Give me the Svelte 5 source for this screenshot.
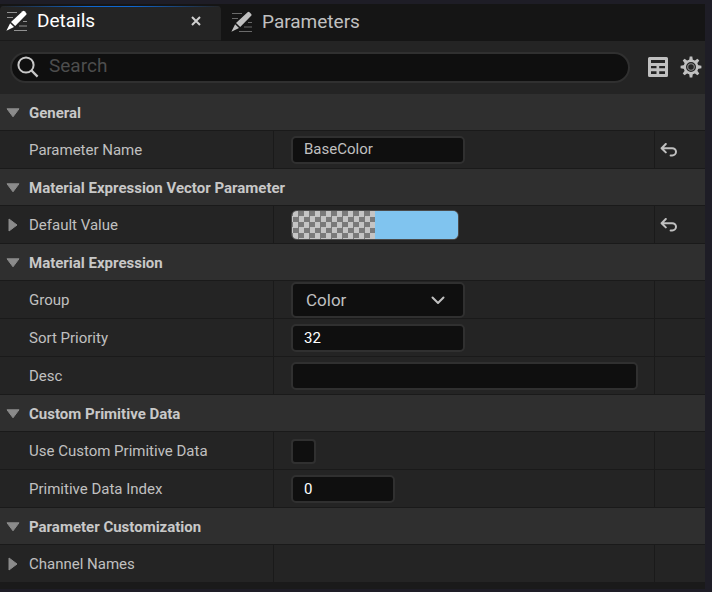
<script>
  let search = $state('');
  let open = $state({ general: true, vector: true, expression: true, primitive: true, custom: true });
  let name = $state('BaseColor');
  let group = $state('Color');
  let priority = $state('32');
  let desc = $state('');
  let usePrimitive = $state(false);
  let primitiveIndex = $state('0');
</script>

{#snippet pencil()}
  <svg class="pencil" viewBox="0 0 22 22" width="22" height="22" aria-hidden="true">
    <path d="M1 2.5h10M1 7.5h6M17 11.5h4M13 16h8M8 20.5h13" stroke="currentColor" stroke-width="1.2" opacity=".5" fill="none" />
    <path d="M16.6 1.2q1-.8 1.9 0l1.7 1.7q.9.9 0 1.9L9.2 16 5 11.9z" fill="currentColor" />
    <path d="M4.1 13.2 8 17 .4 20.8z" fill="currentColor" />
  </svg>
{/snippet}

{#snippet header(key, title)}
  <h2>
    <button class="head" aria-expanded={open[key]} onclick={() => (open[key] = !open[key])}>
      <svg class="arrow" class:shut={!open[key]} viewBox="0 0 14 10" width="14" height="10" aria-hidden="true">
        <path d="M1 .8h12L7 8.8z" fill="#8b8b8b" stroke="#8b8b8b" stroke-linejoin="round" />
      </svg>
      <span>{title}</span>
    </button>
  </h2>
{/snippet}

{#snippet expander(label)}
  <button class="expander" aria-label={label}>
    <svg viewBox="0 0 10 14" width="10" height="14" aria-hidden="true">
      <path d="M1 1v12l8-6z" fill="#8b8b8b" stroke="#8b8b8b" stroke-linejoin="round" />
    </svg>
  </button>
{/snippet}

{#snippet reset(label)}
  <button class="reset" aria-label={label}>
    <svg viewBox="0 0 18 14" width="18" height="14" aria-hidden="true">
      <path d="M5.8 1 1.6 5.2l4.2 4.2M1.8 5.2h10.400a3.800 3.600 0 0 1 0 7.200H10.600" fill="none" stroke="#c0c0c0" stroke-width="2" stroke-linecap="round" stroke-linejoin="round" />
    </svg>
  </button>
{/snippet}

<main>
  <nav>
    <div class="tab active">
      <button class="title">{@render pencil()}Details</button>
      <button class="close" aria-label="Close Details">
        <svg viewBox="0 0 10 10" width="10" height="10"><path d="M1 1l8 8M9 1 1 9" stroke="#d0d0d0" stroke-width="2" /></svg>
      </button>
    </div>
    <div class="tab">
      <button class="title">{@render pencil()}Parameters</button>
    </div>
  </nav>

  <div class="tools">
    <label class="search">
      <svg viewBox="0 0 22 22" width="22" height="22" aria-hidden="true">
        <circle cx="9" cy="9" r="7.6" fill="none" stroke="#c8c8c8" stroke-width="2" />
        <path d="M14.4 14.4 20.6 20.6" stroke="#c8c8c8" stroke-width="2.2" />
      </svg>
      <input type="text" placeholder="Search" aria-label="Search" bind:value={search} />
    </label>
    <button class="tool" aria-label="Property matrix">
      <svg viewBox="0 0 20 20" width="20" height="20">
        <path fill="#c0c0c0" fill-rule="evenodd" d="M1.5 0h17Q20 0 20 1.5v17q0 1.5-1.5 1.5h-17Q0 20 0 18.500v-17Q0 0 1.500 0zM3 3v3h14V3zM3 9v2.200h5.500V9zM11.200 9v2.200H17V9zM3 14.300V17h5.500v-2.700zM11.200 14.300V17H17v-2.700z" />
      </svg>
    </button>
    <button class="tool" aria-label="Settings">
      <svg viewBox="-11 -11 22 22" width="22" height="22">
        {#each [0, 45, 90, 135, 180, 225, 270, 315] as angle}
          <path d="M-1.900-6.500-1.300-10.400h2.600L1.900-6.500z" fill="#c0c0c0" transform="rotate({angle})" />
        {/each}
        <circle r="6.200" fill="none" stroke="#c0c0c0" stroke-width="2.400" />
        <circle r="3.300" fill="none" stroke="#8c8c8c" stroke-width="1.100" />
      </svg>
    </button>
  </div>

  <section>
    {@render header('general', 'General')}
    {#if open.general}
      <div class="row">
        <label class="name" for="pname">Parameter Name</label>
        <div class="value"><input id="pname" class="field mid raised" type="text" bind:value={name} /></div>
        <div class="extra">{@render reset('Reset Parameter Name')}</div>
      </div>
    {/if}
  </section>

  <section>
    {@render header('vector', 'Material Expression Vector Parameter')}
    {#if open.vector}
      <div class="row">
        <div class="name">{@render expander('Expand Default Value')}Default Value</div>
        <div class="value"><button class="swatch" aria-label="Default Value colour"><i></i></button></div>
        <div class="extra">{@render reset('Reset Default Value')}</div>
      </div>
    {/if}
  </section>

  <section>
    {@render header('expression', 'Material Expression')}
    {#if open.expression}
      <div class="row">
        <label class="name" for="group">Group</label>
        <div class="value">
          <div class="combo">
            <select id="group" bind:value={group}><option>Color</option></select>
            <svg viewBox="0 0 14 9" width="14" height="9" aria-hidden="true"><path d="M1.500 1.500 7 7l5.500-5.500" fill="none" stroke="#c0c0c0" stroke-width="2" stroke-linecap="round" stroke-linejoin="round" /></svg>
          </div>
        </div>
        <div class="extra"></div>
      </div>
      <div class="row">
        <label class="name" for="priority">Sort Priority</label>
        <div class="value"><input id="priority" class="field mid number" type="text" inputmode="numeric" bind:value={priority} /></div>
        <div class="extra"></div>
      </div>
      <div class="row">
        <label class="name" for="desc">Desc</label>
        <div class="value"><input id="desc" class="field" type="text" bind:value={desc} /></div>
        <div class="extra"></div>
      </div>
    {/if}
  </section>

  <section>
    {@render header('primitive', 'Custom Primitive Data')}
    {#if open.primitive}
      <div class="row">
        <label class="name" for="useprim">Use Custom Primitive Data</label>
        <div class="value"><input id="useprim" type="checkbox" bind:checked={usePrimitive} /></div>
        <div class="extra"></div>
      </div>
      <div class="row">
        <label class="name" for="primindex">Primitive Data Index</label>
        <div class="value"><input id="primindex" class="field short number" type="text" inputmode="numeric" bind:value={primitiveIndex} /></div>
        <div class="extra"></div>
      </div>
    {/if}
  </section>

  <section>
    {@render header('custom', 'Parameter Customization')}
    {#if open.custom}
      <div class="row">
        <div class="name">{@render expander('Expand Channel Names')}Channel Names</div>
        <div class="value"></div>
        <div class="extra"></div>
      </div>
    {/if}
  </section>
  <footer></footer>
</main>

<style>
  :global(body) {
    margin: 0;
    background: #1e1d26;
  }
  * {
    box-sizing: border-box;
  }
  main {
    margin: 4px 7px 0 0;
    background: #242424;
    color: #c0c0c0;
    font: 15px/20px Roboto, sans-serif;
  }
  button,
  input,
  select {
    font: inherit;
    color: inherit;
    background: none;
    border: 0;
    margin: 0;
    padding: 0;
    outline: 0;
  }
  button {
    display: flex;
    align-items: center;
  }
  svg {
    display: block;
    flex: none;
  }
  nav {
    display: flex;
    height: 37px;
    background: #151515;
  }
  .tab {
    display: flex;
    align-items: center;
    justify-content: space-between;
    padding: 0 20px 2px 10px;
    font-size: 19px;
    line-height: 24px;
  }
  .tab.active {
    width: 221px;
    margin-top: 2px;
    padding: 0 20px 4px 6px;
    color: #fff;
    background: linear-gradient(90deg, #242424, #0f66d0 40%, #0f66d0 60%, #242424) top / 100% 1px no-repeat #242424;
    border-bottom: 1px solid #1a1a1a;
    border-radius: 4px 4px 0 0;
  }
  .title {
    gap: 9px;
  }
  .tools {
    display: flex;
    align-items: center;
    gap: 12px;
    height: 53px;
    padding: 0 3px 1px 10px;
  }
  .search {
    flex: 1;
    display: flex;
    align-items: center;
    gap: 10px;
    height: 31px;
    margin-right: 6px;
    padding: 0 16px 0 5px;
    background: #0f0f0f;
    border: 2px solid #303030;
    border-radius: 16px;
  }
  .search input {
    flex: 1;
    min-width: 0;
    height: 26px;
    padding-bottom: 3px;
    font-size: 19px;
  }
  .search input::placeholder {
    color: #4d4d4d;
    opacity: 1;
  }
  h2 {
    margin: 0;
    font-size: 15px;
  }
  .head {
    width: 100%;
    height: 37px;
    gap: 9px;
    padding: 1px 0 0 6px;
    background: #2f2f2f;
    border-bottom: 1px solid #1a1a1a;
    font-weight: 700;
    color: #c8c8c8;
  }
  .shut {
    transform: rotate(-90deg);
  }
  .row {
    display: grid;
    grid-template-columns: 274px 1fr 51px;
    height: 38px;
    border-bottom: 1px solid #1a1a1a;
  }
  .name {
    display: flex;
    align-items: center;
    padding: 1px 0 0 29px;
    border-right: 1px solid #1a1a1a;
  }
  .expander {
    width: 21px;
    margin-left: -21px;
  }
  .value {
    display: flex;
    align-items: center;
    padding: 1px 16px 0 17px;
    min-width: 0;
  }
  .extra {
    display: flex;
    align-items: center;
    padding: 1px 0 0 5px;
    border-left: 1px solid #1a1a1a;
  }
  .field {
    width: 100%;
    height: 28px;
    padding: 0 11px;
    background: #0f0f0f;
    border: 2px solid #303030;
    border-radius: 5px;
  }
  .mid,
  .combo {
    width: 174px;
  }
  .short {
    width: 104px;
  }
  .raised {
    padding-bottom: 3px;
  }
  .number {
    color: #fff;
  }
  .combo {
    display: grid;
    align-items: center;
    height: 36px;
    background: #0f0f0f;
    border: 2px solid #303030;
    border-radius: 5px;
  }
  .combo select,
  .combo svg {
    grid-area: 1 / 1;
  }
  .combo select {
    appearance: none;
    height: 32px;
    padding: 0 40px 0 13px;
    font-size: 17px;
  }
  .combo svg {
    justify-self: end;
    margin-right: 18px;
    pointer-events: none;
  }
  .swatch {
    width: 168px;
    height: 30px;
    border: 1px solid #4a4a4a;
    border-radius: 6px;
    overflow: hidden;
    background: repeating-conic-gradient(#7a7a7a 0 25%, #c4c4c4 0 50%) 1px 0 / 11px 11px;
    justify-content: flex-end;
  }
  .swatch i {
    width: 50%;
    height: 100%;
    background: #80c4ef;
  }
  input[type='checkbox'] {
    appearance: none;
    width: 25px;
    height: 25px;
    background: #0f0f0f;
    border: 2px solid #303030;
    border-radius: 4px;
  }
  input[type='checkbox']:checked {
    background: #0070e0;
  }
  footer {
    height: 6px;
    background: #1a1a1a;
  }
</style>
